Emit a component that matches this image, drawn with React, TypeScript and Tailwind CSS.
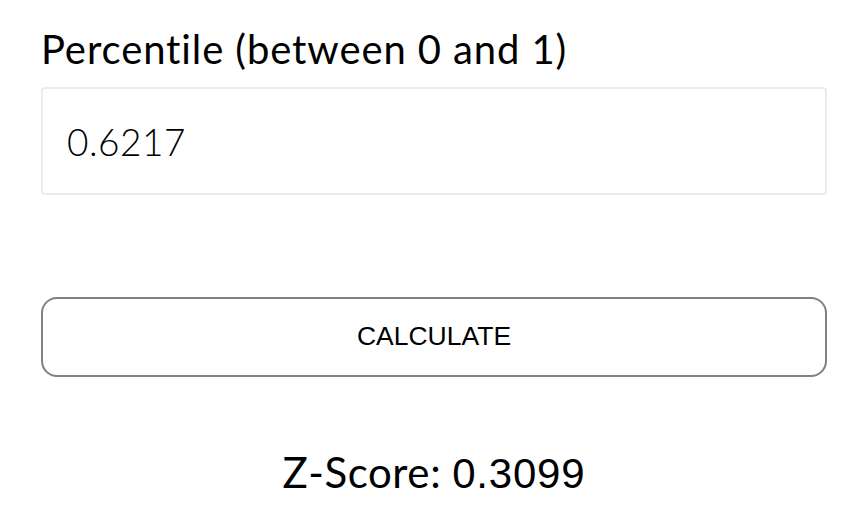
import { useState } from "react";

export default function App() {
  const [percentile, setPercentile] = useState("0.6217");

  return (
    <div className="w-[860px] h-[510px] bg-white pl-[41px] pr-[33px] pt-[24px] text-black">
      {/* Percentile input */}
      <label
        htmlFor="percentile"
        className="block text-[40px] leading-[50px] font-['Lato',sans-serif] tracking-[0.9px]"
      >
        Percentile (between 0 and 1)
      </label>
      <input
        id="percentile"
        value={percentile}
        onChange={(e) => setPercentile(e.target.value)}
        className="mt-[13px] block w-full h-[108px] border-2 border-[#ececec] rounded-[4px] pl-[24px] text-[37px] tracking-[0.5px] font-light font-['Lato',sans-serif] text-black outline-none"
      />

      {/* Action */}
      <button className="mt-[102px] block w-full h-[80px] border-2 border-[#818181] rounded-[16px] bg-white text-[26.5px] font-['Liberation_Sans',Arial,sans-serif] text-black">
        CALCULATE
      </button>

      {/* Result */}
      <p className="mt-[70px] text-center text-[42px] leading-[50px]">
        <span className="font-['Lato',sans-serif] tracking-[0.6px]">Z-Score:</span>{" "}
        <span className="font-['Liberation_Sans',Arial,sans-serif] tracking-[0.8px]">0.3099</span>
      </p>
    </div>
  );
}
